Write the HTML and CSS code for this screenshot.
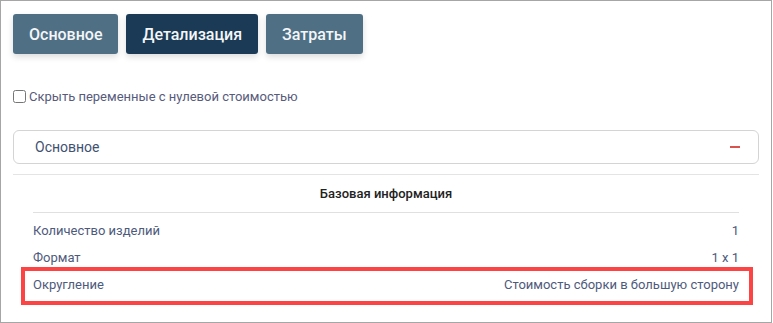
FILE: index.html
```html
<!DOCTYPE html>
<html lang="ru">
<head>
  <meta charset="UTF-8" />
  <meta name="viewport" content="width=device-width, initial-scale=1.0"/>
  <title>Калькуляция</title>
  <link rel="stylesheet" href="styles.css">
</head>
<body>
  <div class="frame">
    <div class="tabs">
      <button class="tab">Основное</button>
      <button class="tab active">Детализация</button>
      <button class="tab">Затраты</button>
    </div>

    <label class="hide-zero">
      <input type="checkbox">
      <span>Скрыть переменные с нулевой стоимостью</span>
    </label>

    <div class="accordion">
      <div class="acc-head">
        <span>Основное</span>
        <span class="minus"></span>
      </div>
      <div class="acc-body">
        <div class="section-title">Базовая информация</div>
        <div class="rows">
          <div class="row"><span>Количество изделий</span><span>1</span></div>
          <div class="row"><span>Формат</span><span>1 x 1</span></div>
          <div class="row marked"><span>Округление</span><span>Стоимость сборки в большую сторону</span></div>
        </div>
      </div>
    </div>
  </div>
</body>
</html>
```

FILE: styles.css
```css
body {
  margin: 0;
  font-family: Roboto, 'Liberation Sans', sans-serif;
  background: #fff;
}
.frame {
  box-sizing: border-box;
  width: 772px;
  height: 323px;
  border: 1px solid #a6a6a6;
  padding: 13px 12px 0 12px;
  overflow: hidden;
}
.tabs {
  display: flex;
  gap: 8px;
}
.tab {
  height: 40px;
  padding: 0 16px;
  border: none;
  border-radius: 3px;
  background: #4f6f85;
  color: #f4f6f8;
  font-family: inherit;
  font-size: 16px;
  font-weight: 500;
  box-shadow: 0 3px 6px rgba(0, 0, 0, 0.14);
  cursor: pointer;
}
.tab.active {
  background: #1b3a56;
}
.hide-zero {
  display: flex;
  align-items: center;
  gap: 3px;
  margin-top: 35px;
  height: 14px;
  font-size: 13px;
  color: #575b7c;
}
.hide-zero input {
  width: 13px;
  height: 13px;
  margin: 0;
}
.accordion {
  margin-top: 27px;
}
.acc-head {
  box-sizing: border-box;
  height: 34px;
  display: flex;
  align-items: center;
  justify-content: space-between;
  padding: 0 18px 0 21px;
  border: 1px solid #d4d4d4;
  border-radius: 6px;
  font-size: 14px;
  color: #3f5271;
}
.minus {
  width: 10px;
  height: 2px;
  background: #d9534f;
}
.acc-body {
  margin-top: 10px;
  border-top: 1px solid #e4e4e4;
  padding: 0 20px;
}
.section-title {
  padding: 12px 0 11px;
  line-height: 14px;
  text-align: center;
  font-size: 13px;
  font-weight: 500;
  color: #222;
  border-bottom: 1px solid #e0e0e0;
}
.rows {
  padding-top: 4px;
}
.row {
  display: flex;
  justify-content: space-between;
  align-items: center;
  height: 27px;
  font-size: 13px;
  color: #4e5a7c;
}
.row.marked {
  position: relative;
}
.row.marked::after {
  content: "";
  position: absolute;
  top: -4px;
  bottom: -7px;
  left: -12px;
  right: -14px;
  border: 4px solid #fd4444;
}
```
